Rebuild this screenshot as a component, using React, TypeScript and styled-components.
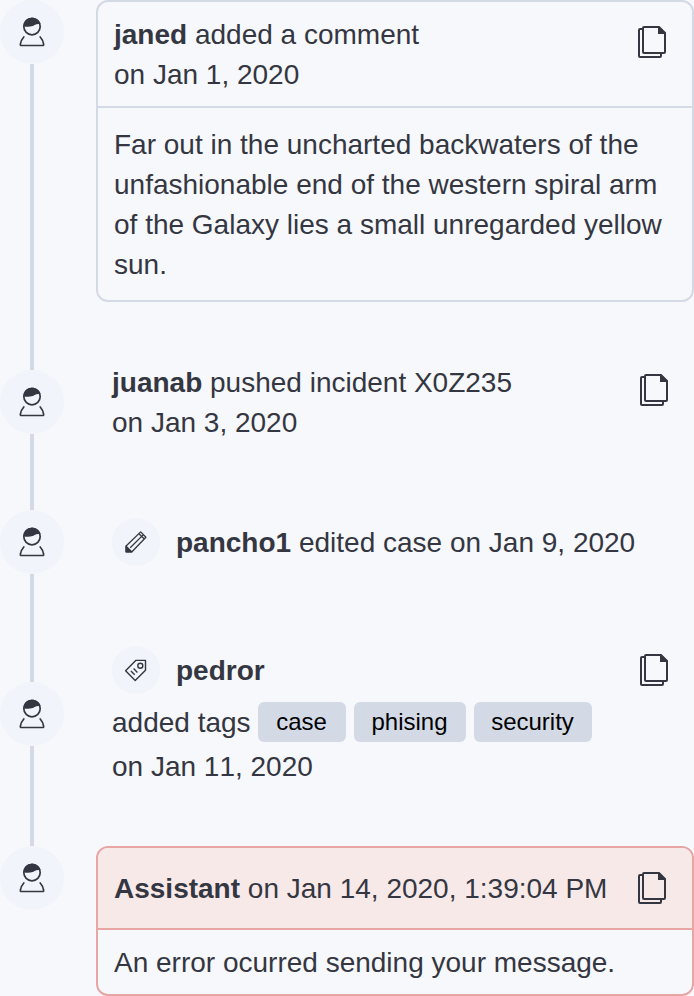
import React from "react";
import styled, { createGlobalStyle, css } from "styled-components";

const ink = "#343741";
const line = "#d3dae6";
const danger = "#e7a6a3";

const GlobalStyle = createGlobalStyle`
  *, *::before, *::after { box-sizing: border-box; }
  body {
    margin: 0;
    background: #f7f8fc;
    color: ${ink};
    font-family: "Liberation Sans", Arial, sans-serif;
    font-size: 28px;
    line-height: 40px;
  }
`;

const Timeline = styled.ol`
  width: 694px;
  margin: 0;
  padding: 0;
  list-style: none;
`;

const Entry = styled.li<{ $height: number }>`
  display: grid;
  grid-template-columns: 64px 1fr;
  column-gap: 32px;
  height: ${(p) => p.$height}px;
`;

const Rail = styled.div`
  display: flex;
  flex-direction: column;
  align-items: center;
`;

const Segment = styled.span<{ $length?: number }>`
  width: 4px;
  background: ${line};
  ${(p) =>
    p.$length === undefined
      ? css`flex: 1;`
      : css`flex: none; height: ${p.$length}px;`}
`;

const Avatar = styled.span<{ $size: number }>`
  flex: none;
  display: block;
  width: ${(p) => p.$size}px;
  height: ${(p) => p.$size}px;
  border-radius: 50%;
  background: #f1f4fb;
  svg { display: block; }
`;

const Panel = styled.article<{ $danger?: boolean; $top?: number }>`
  margin-top: ${(p) => p.$top ?? 0}px;
  align-self: start;
  width: 598px;
  border: 2px solid ${(p) => (p.$danger ? danger : line)};
  border-radius: 12px;
  overflow: hidden;
`;

const PanelHeader = styled.header<{ $danger?: boolean }>`
  display: flex;
  align-items: flex-start;
  justify-content: space-between;
  height: ${(p) => (p.$danger ? 82 : 106)}px;
  padding: ${(p) => (p.$danger ? 21 : 13)}px 24px 0 16px;
  border-bottom: 2px solid ${(p) => (p.$danger ? danger : line)};
  background: ${(p) => (p.$danger ? "#f8e9e9" : "transparent")};
`;

const PanelBody = styled.div<{ $danger?: boolean }>`
  height: ${(p) => (p.$danger ? 64 : 192)}px;
  padding: ${(p) => (p.$danger ? 13 : 17)}px 16px 0;
`;

const Update = styled.article`
  display: flex;
  align-items: flex-start;
  align-self: center;
  justify-content: space-between;
  padding: 0 24px 0 16px;
`;

const Message = styled.div`
  padding-top: 1px;
  margin-bottom: -1px;
`;

const Line = styled.p<{ $unkerned?: boolean }>`
  margin: 0;
  white-space: nowrap;
  font-kerning: ${(p) => (p.$unkerned ? "none" : "auto")};
`;

const IconLine = styled(Line)`
  display: flex;
  align-items: center;
  gap: 16px;
  height: 48px;
`;

const Label = styled.span`
  padding-top: 2px;
`;

const TagLine = styled(Line)`
  display: flex;
  align-items: flex-start;
  gap: 8px;
  height: 40px;
  margin: 8px 0 5px;
`;

const TagLabel = styled.span`
  width: 138px;
  padding-top: 1px;
`;

const Tag = styled.span<{ $width: number }>`
  width: ${(p) => p.$width}px;
  height: 40px;
  padding-right: 1px;
  border-radius: 6px;
  background: ${line};
  color: #000;
  font-size: 24px;
  line-height: 40px;
  text-align: center;
`;

const TagMessage = styled.div`
  margin-bottom: -5px;
`;

const CopyButton = styled.button<{ $top: number }>`
  flex: none;
  width: 32px;
  height: 32px;
  margin-top: ${(p) => p.$top}px;
  padding: 0;
  border: 0;
  background: none;
  svg { display: block; }
`;

const Copy = ({ top = 0 }: { top?: number }) => (
  <CopyButton $top={top} aria-label="Copy reference link">
    <svg width="32" height="32" viewBox="0 0 32 32" fill="none" stroke={ink} strokeWidth="2">
      <path d="M7 3H4a1 1 0 0 0-1 1v26a1 1 0 0 0 1 1h20a1 1 0 0 0 1-1v-3" />
      <path d="M8 1h15l6 6v19a1 1 0 0 1-1 1H8a1 1 0 0 1-1-1V2a1 1 0 0 1 1-1Z" />
      <path d="M22 1h1.5L29 6.5V8h-7Z" fill={ink} stroke="none" />
    </svg>
  </CopyButton>
);

const User = () => (
  <Avatar $size={64}>
    <svg width="64" height="64" viewBox="0 0 64 64" fill="none" stroke={ink} strokeWidth="1.7">
      <circle cx="32" cy="26.6" r="8.2" />
      <path
        d="M23.5 26.2C23.5 21.3 27.2 17.8 32 17.8c4.4 0 7.8 2.7 8.6 6.4-2.6-.5-4.2-.2-5.9.9-2.4 1.6-6.9 2.3-11.2 1.1Z"
        fill={ink}
        stroke="none"
      />
      <path
        d="M23.8 37c-2 2.2-3.3 5-3.5 7.4-.1.6.3 1.1 1 1.1h21.4c.7 0 1.1-.5 1-1.1-.2-2.4-1.5-5.2-3.5-7.4"
        strokeLinecap="round"
      />
    </svg>
  </Avatar>
);

const Pencil = () => (
  <Avatar $size={48}>
    <svg width="48" height="48" viewBox="0 0 48 48" fill="none" stroke={ink} strokeWidth="1.3" strokeLinejoin="round">
      <path d="M14.1 28 28.7 13.9l5.2 5.3L20 33.8h-5.9Z" />
      <path d="m18.2 29.8 13.2-13.2M27 15.7l5.1 5.1" />
      <path d="m14.1 28.2 5.6 5.6h-5.6Z" fill={ink} />
    </svg>
  </Avatar>
);

const TagMark = () => (
  <Avatar $size={48}>
    <svg width="48" height="48" viewBox="0 0 48 48" fill="none" stroke={ink} strokeWidth="1.4" strokeLinejoin="round">
      <path d="m13.6 24.7 10.1-10.3h9.8v9.9L23.2 34.4Z" />
      <circle cx="28.3" cy="19.7" r="2.5" />
      <path d="m18.9 24.9 3.8 3.8M21.6 22.6l3.8 3.8" />
    </svg>
  </Avatar>
);

export default function App() {
  return (
    <>
      <GlobalStyle />
      <Timeline>
        <Entry $height={332}>
          <Rail>
            <User />
            <Segment />
          </Rail>
          <Panel>
            <PanelHeader>
              <div>
                <Line><b>janed</b> added a comment</Line>
                <Line>on Jan 1, 2020</Line>
              </div>
              <Copy top={11} />
            </PanelHeader>
            <PanelBody>
              Far out in the uncharted backwaters of the unfashionable end of the western
              spiral arm of the Galaxy lies a small unregarded yellow sun.
            </PanelBody>
          </Panel>
        </Entry>
        <Entry $height={140}>
          <Rail>
            <Segment />
            <User />
            <Segment />
          </Rail>
          <Update>
            <Message>
              <Line><b>juanab</b> pushed incident X0Z235</Line>
              <Line>on Jan 3, 2020</Line>
            </Message>
            <Copy top={12} />
          </Update>
        </Entry>
        <Entry $height={140}>
          <Rail>
            <Segment />
            <User />
            <Segment />
          </Rail>
          <Update>
            <IconLine>
              <Pencil />
              <Label><b>pancho1</b> edited case on Jan 9, 2020</Label>
            </IconLine>
          </Update>
        </Entry>
        <Entry $height={204}>
          <Rail>
            <Segment />
            <User />
            <Segment />
          </Rail>
          <Update>
            <TagMessage>
              <IconLine>
                <TagMark />
                <Label><b>pedror</b></Label>
              </IconLine>
              <TagLine>
                <TagLabel>added tags</TagLabel>
                <Tag $width={88}>case</Tag>
                <Tag $width={112}>phising</Tag>
                <Tag $width={118}>security</Tag>
              </TagLine>
              <Line $unkerned>on Jan 11, 2020</Line>
            </TagMessage>
            <Copy top={8} />
          </Update>
        </Entry>
        <Entry $height={180}>
          <Rail>
            <Segment $length={30} />
            <User />
          </Rail>
          <Panel $danger $top={30}>
            <PanelHeader $danger>
              <Line><b>Assistant</b> on Jan 14, 2020, 1:39:04 PM</Line>
              <Copy top={3} />
            </PanelHeader>
            <PanelBody $danger>An error ocurred sending your message.</PanelBody>
          </Panel>
        </Entry>
      </Timeline>
    </>
  );
}
